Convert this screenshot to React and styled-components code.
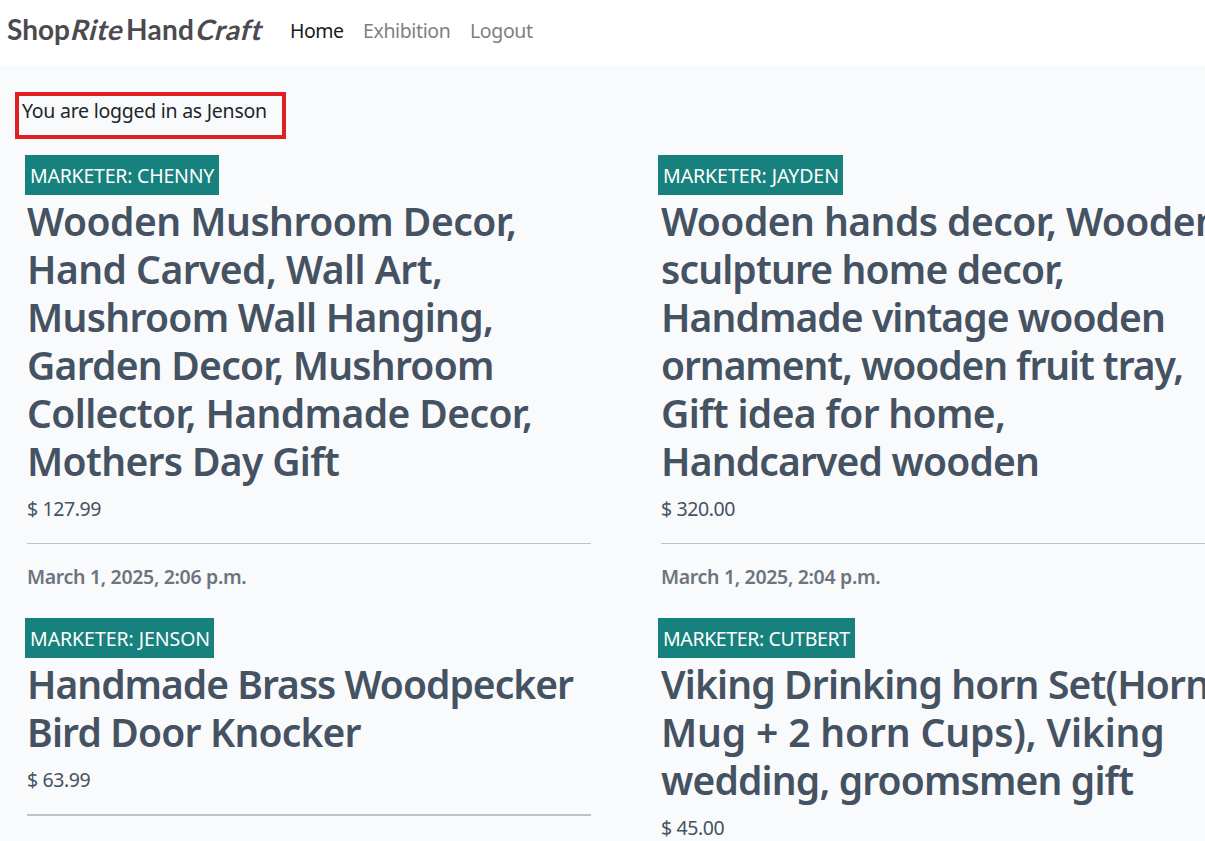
import React from 'react';
import styled, { createGlobalStyle } from 'styled-components';

const GlobalStyle = createGlobalStyle`
  *, *::before, *::after { box-sizing: border-box; }
  html, body { margin: 0; padding: 0; overflow: hidden; }
  body {
    height: 100vh;
    background: #f9fafc;
    color: #212529;
    font-family: "Segoe UI", "Noto Sans", "Open Sans", sans-serif;
    font-size: 19.5px;
    font-weight: 380;
    line-height: 30px;
  }
  #root { height: 100%; }
`;

const Page = styled.div`
  height: 100%;
  overflow: hidden;
`;

const Navbar = styled.header`
  display: flex;
  align-items: flex-start;
  height: 65px;
  padding: 14px 7px 0;
  background: #fff;
`;

const Brand = styled.a`
  display: flex;
  width: 283px;
  color: #4a4a4f;
  font-family: Lato, sans-serif;
  font-size: 28px;
  font-weight: 700;
  white-space: nowrap;
`;

const BrandWord = styled.span`
  width: ${(p) => p.$width}px;
  letter-spacing: ${(p) => p.$tracking || 0}px;
`;

const BrandSlant = styled(BrandWord)`
  transform: skewX(-14deg);
  transform-origin: 0 24px;
`;

const NavList = styled.nav`
  display: flex;
`;

const NavLink = styled.a`
  width: ${(p) => p.$width}px;
  color: ${(p) => (p.$active ? '#191919' : '#7f7f7f')};
  letter-spacing: ${(p) => p.$tracking}px;
  padding-top: 2px;
  white-space: nowrap;
`;

const Notice = styled.p`
  width: 271px;
  height: 47px;
  margin: 27px 0 0 15px;
  padding: 0 0 0 3px;
  border: 4px solid #e02023;
  letter-spacing: -0.25px;
  white-space: nowrap;
`;

const Listings = styled.main`
  display: grid;
  grid-template-columns: 564px 564px;
  column-gap: 70px;
  row-gap: 29px;
  width: 1225px;
  padding: 16px 0 0 27px;
`;

const Card = styled.article`
  display: flex;
  flex-direction: column;
  align-items: flex-start;
  color: #445261;
`;

const Badge = styled.div`
  width: ${(p) => p.$width}px;
  height: 40px;
  margin-left: ${(p) => p.$shift}px;
  padding: 6px 0 4px 5px;
  background: #17817e;
  color: #fff;
  letter-spacing: ${(p) => p.$tracking}px;
  white-space: nowrap;
`;

const Title = styled.h2`
  margin: 2px 0 9px;
  font-size: 39px;
  font-weight: 560;
  line-height: 48px;
`;

const TitleLine = styled.span`
  display: block;
  letter-spacing: ${(p) => p.$tracking}px;
  white-space: nowrap;
`;

const Price = styled.p`
  margin: 0 0 19px;
  letter-spacing: -0.4px;
`;

const Rule = styled.hr`
  width: 100%;
  height: ${(p) => p.$thick}px;
  margin: 0 0 21px;
  border: 0;
  background: #bec1c5;
`;

const Posted = styled.time`
  display: block;
  color: #6c757d;
  font-weight: 580;
  line-height: 24px;
  letter-spacing: -0.33px;
`;

const links = [
  { label: 'Home', width: 73, tracking: -0.49, active: true },
  { label: 'Exhibition', width: 107, tracking: -0.38 },
  { label: 'Logout', width: 70, tracking: -0.37 },
];

const listings = [
  {
    marketer: 'CHENNY', badge: 194, shift: -2, tracking: -0.22, price: '127.99', rule: 1,
    posted: 'March 1, 2025, 2:06 p.m.',
    title: [
      ['Wooden Mushroom Decor,', -0.5],
      ['Hand Carved, Wall Art,', -0.54],
      ['Mushroom Wall Hanging,', -0.69],
      ['Garden Decor, Mushroom', -0.75],
      ['Collector, Handmade Decor,', -0.6],
      ['Mothers Day Gift', -0.65],
    ],
  },
  {
    marketer: 'JAYDEN', badge: 185, shift: -3, tracking: -0.06, price: '320.00', rule: 1,
    posted: 'March 1, 2025, 2:04 p.m.',
    title: [
      ['Wooden hands decor, Wooden', -0.54],
      ['sculpture home decor,', -0.84],
      ['Handmade vintage wooden', -0.92],
      ['ornament, wooden fruit tray,', -1.08],
      ['Gift idea for home,', -0.66],
      ['Handcarved wooden', -0.83],
    ],
  },
  {
    marketer: 'JENSON', badge: 189, shift: -2, tracking: -0.06, price: '63.99', rule: 2,
    title: [
      ['Handmade Brass Woodpecker', -1.0],
      ['Bird Door Knocker', -0.82],
    ],
  },
  {
    marketer: 'CUTBERT', badge: 197, shift: -3, tracking: -0.38, price: '45.00', rule: 1,
    title: [
      ['Viking Drinking horn Set(Horn', -0.85],
      ['Mug + 2 horn Cups), Viking', -0.15],
      ['wedding, groomsmen gift', -0.85],
    ],
  },
];

export default function App() {
  return (
    <Page>
      <GlobalStyle />
      <Navbar>
        <Brand>
          <BrandWord $width={63}>Shop</BrandWord>
          <BrandSlant $width={56} $tracking={0.5}>Rite</BrandSlant>
          <BrandWord $width={69} $tracking={0.3}>Hand</BrandWord>
          <BrandSlant $width={66} $tracking={0.6}>Craft</BrandSlant>
        </Brand>
        <NavList>
          {links.map((l) => (
            <NavLink key={l.label} $width={l.width} $tracking={l.tracking} $active={l.active}>
              {l.label}
            </NavLink>
          ))}
        </NavList>
      </Navbar>
      <Notice>You are logged in as Jenson</Notice>
      <Listings>
        {listings.map((item) => (
          <Card key={item.marketer}>
            <Badge $width={item.badge} $shift={item.shift} $tracking={item.tracking}>
              MARKETER: {item.marketer}
            </Badge>
            <Title>
              {item.title.map(([text, tracking]) => (
                <TitleLine key={text} $tracking={tracking}>{text}</TitleLine>
              ))}
            </Title>
            <Price>$ {item.price}</Price>
            <Rule $thick={item.rule} />
            {item.posted && <Posted>{item.posted}</Posted>}
          </Card>
        ))}
      </Listings>
    </Page>
  );
}
